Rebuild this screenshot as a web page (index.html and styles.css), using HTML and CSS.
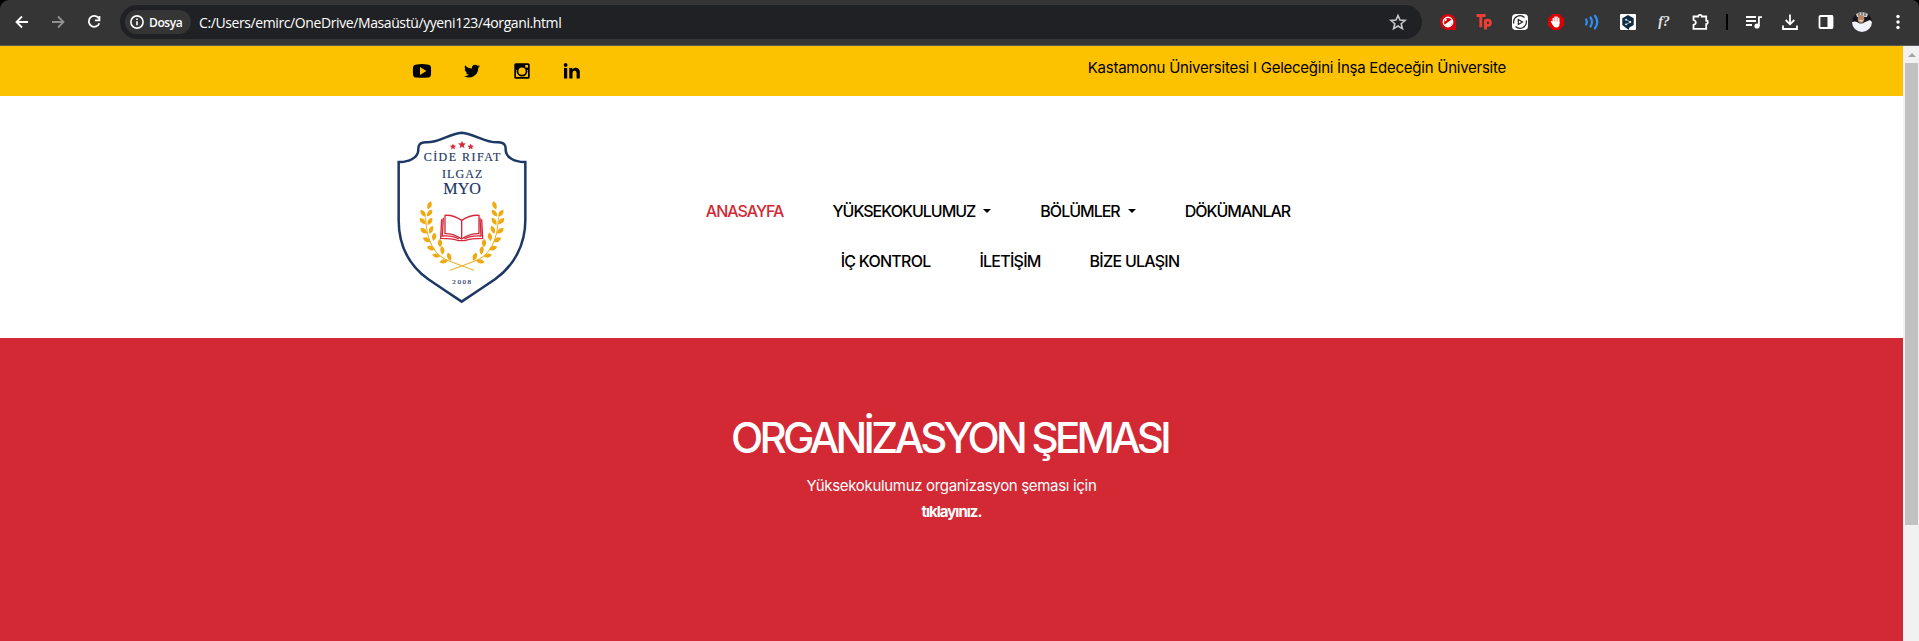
FILE: index.html
```html
<!DOCTYPE html>
<html lang="tr">
<head>
<meta charset="utf-8">
<title>Organizasyon Şeması</title>
<link rel="stylesheet" href="styles.css">
</head>
<body>
<div class="toolbar">
  <div class="nav-buttons">
    <svg class="ic" viewBox="0 0 24 24"><path class="line" d="M18 12H7M12 6.5L6.5 12l5.500 5.500"/></svg>
    <svg class="ic dim" viewBox="0 0 24 24"><path class="line" d="M6 12h11M12 6.500l5.500 5.500-5.500 5.500"/></svg>
    <svg class="ic" viewBox="0 0 24 24"><path class="line" d="M16.600 8.200A5.400 5.400 0 1 0 17.300 13.200M17.400 6v4.400H13"/></svg>
  </div>
  <div class="omnibox">
    <div class="chip">
      <svg class="info" viewBox="0 0 14 14"><circle cx="7" cy="7" r="6.100"/><path d="M7 6.200v4M7 3.600v1.500"/></svg>
      <span class="chip-text">Dosya</span>
    </div>
    <span class="url">C:/Users/emirc/OneDrive/Masaüstü/yyeni123/4organi.html</span>
    <svg class="ic star" viewBox="0 0 24 24"><path d="M12 5.500l2 4.600 5 .4-3.800 3.200 1.200 4.900L12 16l-4.400 2.600 1.200-4.900L5 10.500l5-.4z"/></svg>
  </div>
  <div class="extensions">
    <svg class="ic" viewBox="0 0 24 24"><path fill="#d3060f" d="M12 4a8 8 0 1 0 0 16h8v-8a8 8 0 0 0-8-8z"/><circle cx="12" cy="12" r="4.700" fill="none" stroke="#fff" stroke-width="1.400"/><path fill="#fff" d="M8 15l7.800-5.500.7 2.500-2 4-4 .5z"/><path fill="#fff" d="M8.800 8.500l2 .3-.5 2-2 .7z"/></svg>
    <svg class="ic" viewBox="0 0 24 24"><path fill="none" stroke="#ef3e36" stroke-width="2.900" d="M4.500 5.500h9M8.800 5.500v11.700M13.500 9.500v10"/><circle cx="15.800" cy="12.800" r="2.700" fill="none" stroke="#ef3e36" stroke-width="2.600"/></svg>
    <svg class="ic" viewBox="0 0 24 24"><rect x="4" y="4" width="16" height="16" rx="4" fill="#fff"/><g fill="none" stroke="#222" stroke-width="1.200"><path d="M5.800 13.500A6.400 6.400 0 0 1 16.500 7.500M18.200 10.500A6.400 6.400 0 0 1 7.500 16.500"/><path d="M10.300 9.500v5l4.200-2.500z"/></g></svg>
    <svg class="ic" viewBox="0 0 24 24"><path fill="#dc0000" d="M8.700 4h6.600L20 8.700v6.600L15.300 20H8.700L4 15.300V8.700z"/><path fill="none" stroke="#fff" stroke-width="1.500" stroke-linecap="round" d="M9.300 13V8.500M11.100 12V7M12.900 12V7M14.700 13V8.300M7.500 11.500l2 3.500"/><path fill="#fff" d="M8.700 11.500h6.800v2.200q0 4-3.400 3.800-2.300 0-3.400-3z"/></svg>
    <svg class="ic" viewBox="0 0 24 24"><path fill="none" stroke="#2f8df5" stroke-width="2.300" stroke-linecap="round" d="M6.200 9.500q1.500 2.500 0 5M10.500 7.500q3 4.500 0 9M15 5.800q4.500 6.200 0 12.400"/></svg>
    <svg class="ic" viewBox="0 0 24 24"><rect x="4" y="4" width="16" height="16" rx="1" fill="#fff"/><path fill="#0f2b46" d="M12 5l5.700 3.300v6.600L13 17.700V20l-3-2-3.700-3.100V8.300z"/><path d="M10 9.500l4.500 2.500-4.500 2.500" fill="none" stroke="#fff" stroke-width=".6"/><g fill="#fff"><circle cx="10" cy="9.700" r=".9"/><circle cx="14.300" cy="12" r=".9"/><circle cx="10" cy="14.300" r=".9"/></g></svg>
    <span class="ic fq">f?</span>
    <svg class="ic" viewBox="0 0 24 24"><path class="line" d="M5.500 6.500h4.700a1.800 1.700 0 0 1 3.600 0h4.400v4a1.600 1.800 0 0 1 0 3.600v4.700H5.500v-4q2.300-.6 2.300-2.400T5.500 10z"/></svg>
    <i class="divider"></i>
    <svg class="ic" viewBox="0 0 24 24"><path class="line" d="M4 7h10M4 11h10M4 15h6M16.900 16V7.200H20"/><circle cx="15" cy="16" r="2.600" fill="#fff"/></svg>
    <svg class="ic" viewBox="0 0 24 24"><path class="line" d="M12 4.500v9.500M7.700 10l4.300 4.300 4.300-4.300M5 15.500V19h14v-3.500"/></svg>
    <svg class="ic" viewBox="0 0 24 24"><rect class="line" x="5.500" y="6" width="13" height="12" rx="1"/><path fill="#fff" d="M13.500 5.500H19v13h-5.500z"/></svg>
    <svg class="ic avatar" viewBox="0 0 20 20"><circle cx="10" cy="10" r="10" fill="#17151a"/><path fill="#c9c9cb" d="M4 2Q10-2 16 2l-1 3H5z"/><path stroke="#444" d="M7 1v3M10 0v3M13 1v3"/><ellipse cx="9" cy="7" rx="3.300" ry="4" fill="#b98668"/><path fill="#f0f3fa" d="M0 10q3-1 5 0 4 3 8 0l5-2 2 2a10 10 0 0 1-20 0z"/><path d="M7.500 8.500q1.500 1 3 0" stroke="#fff" fill="none"/></svg>
    <svg class="ic" viewBox="0 0 24 24"><g fill="#fff"><circle cx="12" cy="6.500" r="1.700"/><circle cx="12" cy="12" r="1.700"/><circle cx="12" cy="17.500" r="1.700"/></g></svg>
  </div>
</div>

<div class="viewport">
  <div class="page">
    <div class="topbar">
      <div class="social">
        <svg class="soc" viewBox="0 0 20 20"><path fill-rule="evenodd" d="M5 3.400Q10 2.800 15 3.400q3.800 0 4 3.200.2 3.400 0 6.800-.2 3.200-4 3.200-5 .5-10 0-3.800 0-4-3.200-.2-3.400 0-6.800.2-3.200 4-3.200zM8 6v8l6.400-4z"/></svg>
        <svg class="soc" viewBox="0 0 24 24"><path d="M21.500 6.200a8 8 0 0 1-2.200.6 3.900 3.900 0 0 0 1.700-2.100 7.800 7.800 0 0 1-2.500.9 3.900 3.900 0 0 0-6.600 3.500A11 11 0 0 1 3.900 5a3.900 3.900 0 0 0 1.200 5.200 3.800 3.800 0 0 1-1.800-.5 3.900 3.900 0 0 0 3.100 3.900 3.900 3.900 0 0 1-1.700.1 3.900 3.900 0 0 0 3.600 2.700A7.800 7.800 0 0 1 2.600 18a11 11 0 0 0 16.900-9.800 7.800 7.800 0 0 0 2-2z"/></svg>
        <svg class="soc" viewBox="0 0 20 20"><rect x="2.300" y="2.300" width="15.400" height="15.400" rx="1.500"/><path fill="#fcc200" d="M4 9h12v7H4z"/><circle cx="10" cy="10.200" r="5.400"/><circle cx="10" cy="10.200" r="3.600" fill="#fcc200"/><path fill="#fcc200" d="M13.300 4H16v2.600h-2.700z"/></svg>
        <svg class="soc" viewBox="0 0 20 20"><circle cx="3.600" cy="4" r="1.900"/><path d="M2 7h3.200v10.500H2zM7.300 7h3v1.500q1-1.800 3.300-1.800 4.200 0 4.200 4.600v6.200h-3.200v-5.600q0-2.500-1.900-2.500-2.200 0-2.200 2.600v5.500H7.300z"/></svg>
      </div>
      <div class="slogan">Kastamonu Üniversitesi I Geleceğini İnşa Edeceğin Üniversite</div>
    </div>

    <div class="header">
      <svg class="logo" viewBox="0 0 480 570">
        <defs>
          <path id="star" d="M0-12L3.200-4 12-3.600 5.200 1.800 7.400 10.800 0 5.800-7.400 10.800-5.200 1.800-12-3.600l8.800-.4z"/>
          <path id="leaf" d="M0-14Q13-2 0 12-13-2 0-14z"/>
          <g id="branch">
            <use href="#leaf" transform="translate(148 257) rotate(20)"/>
            <use href="#leaf" transform="translate(130 281) rotate(-35)"/><use href="#leaf" transform="translate(148 280) rotate(38)"/>
            <use href="#leaf" transform="translate(129 304) rotate(-45)"/><use href="#leaf" transform="translate(149 305) rotate(32)"/>
            <use href="#leaf" transform="translate(132 333) rotate(-52)"/><use href="#leaf" transform="translate(153 330) rotate(22)"/>
            <use href="#leaf" transform="translate(141 360) rotate(-62)"/><use href="#leaf" transform="translate(162 351) rotate(10)"/>
            <use href="#leaf" transform="translate(154 385) rotate(-70)"/><use href="#leaf" transform="translate(180 370) rotate(0)"/>
            <use href="#leaf" transform="translate(170 407) rotate(-80)"/><use href="#leaf" transform="translate(187 392) rotate(-8)"/>
            <use href="#leaf" transform="translate(192 424) rotate(-100)"/><use href="#leaf" transform="translate(208 411) rotate(-18)"/>
            <path d="M137 292Q140 400 210 424L282 451" fill="none" stroke="#eeaa12" stroke-width="3"/>
          </g>
        </defs>
        <path d="M245 38C205 42 178 68 139 67 118 66 114 78 115 91 113 113 88 127 56 126V300C56 375 88 437 145 478Q195 512 245 545 295 512 345 478C402 437 436 375 436 300V126C404 127 379 113 377 91 378 78 374 66 353 67 314 68 285 42 245 38z" fill="#fff" stroke="#1d3864" stroke-width="7.500"/>
        <g fill="#d62839"><use href="#star" transform="translate(219 80) scale(.82)"/><use href="#star" transform="translate(246 74)"/><use href="#star" transform="translate(272 80) scale(.82)"/></g>
        <g class="logo-text">
          <text x="131" y="123" font-size="36" textLength="230">CİDE RIFAT</text>
          <text x="186" y="174" font-size="36" textLength="121">ILGAZ</text>
          <text x="190" y="223" font-size="47" textLength="113" lengthAdjust="spacingAndGlyphs">MYO</text>
          <text x="217" y="491" font-size="21" textLength="56">2008</text>
        </g>
        <g fill="none" stroke="#d62839" stroke-width="4">
          <path d="M245 301Q219 284 195 286V341Q219 340 245 357Q271 340 297 341V286Q271 284 245 301V357"/>
          <path d="M190 293L187 348Q218 346 237 357M300 293L303 348Q272 346 253 357M185 298L182 355Q218 355 235 362H255Q272 355 308 355L305 298"/>
        </g>
        <g fill="#eeaa12"><use href="#branch"/><use href="#branch" transform="translate(492 0) scale(-1 1)"/></g>
      </svg>
      <nav class="menu">
        <div class="row first">
          <a class="item active">ANASAYFA</a>
          <a class="item drop">YÜKSEKOKULUMUZ</a>
          <a class="item drop">BÖLÜMLER</a>
          <a class="item">DÖKÜMANLAR</a>
        </div>
        <div class="row">
          <a class="item">İÇ KONTROL</a>
          <a class="item">İLETİŞİM</a>
          <a class="item">BİZE ULAŞIN</a>
        </div>
      </nav>
    </div>

    <div class="hero">
      <h1 class="title">ORGANİZASYON ŞEMASI</h1>
      <p class="lead">Yüksekokulumuz organizasyon şeması için</p>
      <a class="link">tıklayınız.</a>
    </div>
  </div>
  <div class="scrollbar"><i class="arrow"></i><i class="thumb"></i></div>
</div>
</body>
</html>
```
FILE: styles.css
```css
* { box-sizing: border-box; }
body { margin: 0; height: 641px; overflow: hidden; background: #000; font-family: Inter, "Open Sans", sans-serif; display: flex; flex-direction: column; }

.toolbar { height: 46px; flex: none; background: #353535; border-bottom: 1px solid #5a5a5c; border-radius: 9px 7px 0 0; display: flex; align-items: center; padding: 0 9px 1px 10px; }
.ic { width: 24px; height: 24px; flex: none; display: block; }
.line { fill: none; stroke: #fff; stroke-width: 1.8; }
.dim { opacity: .45; }
.nav-buttons { display: flex; gap: 12px; width: 110px; flex: none; }
.omnibox { width: 1302px; height: 34px; flex: none; border-radius: 17px; background: #202124; display: flex; align-items: center; padding: 0 12px 0 5px; }
.chip { width: 66px; height: 24px; border-radius: 12px; background: #353535; display: flex; align-items: center; padding-left: 5px; gap: 5px; }
.info { width: 14px; height: 14px; fill: none; stroke: #fff; stroke-width: 1.6; }
.chip-text { font: 600 12px "Open Sans", sans-serif; color: #fff; letter-spacing: -.4px; }
.url { font: 14px "Open Sans", sans-serif; color: #fff; margin-left: 8px; letter-spacing: -.4px; white-space: nowrap; }
.star { margin-left: auto; fill: none; stroke: #c8c8c8; stroke-width: 1.6; }
.extensions { display: flex; align-items: center; gap: 12px; margin-left: 14px; }
.fq { font: italic 700 14px/24px "Liberation Serif", serif; color: #e4e4e4; text-align: center; }
.divider { width: 2px; height: 16px; background: #000; margin: 0 2px; }
.avatar { width: 20px; height: 20px; margin: 0 2px; }

.viewport { flex: 1; display: flex; min-height: 0; }
.page { width: 1903px; display: flex; flex-direction: column; background: #fff; }
.scrollbar { width: 16px; background: #f1f1f1; display: flex; flex-direction: column; padding: 7px 1px 0 2px; }
.arrow { width: 0; height: 0; border: 4px solid transparent; border-top-width: 0; border-bottom-color: #a3a3a3; align-self: center; margin-bottom: 6px; }
.thumb { height: 462px; background: #c1c1c1; }

.topbar { height: 50px; background: #fcc200; display: flex; justify-content: space-between; padding: 0 397px 0 412px; }
.social { display: flex; gap: 30px; padding-top: 15px; }
.soc { width: 20px; height: 20px; }
.slogan { font-size: 15px; line-height: 24px; padding-top: 10px; color: #000; white-space: nowrap; letter-spacing: -.25px; }

.header { height: 242px; display: flex; padding: 24px 0 0 380px; }
.logo { width: 160px; height: 190px; }
.logo-text { font-family: "Liberation Serif", serif; fill: #1d3864; stroke: #1d3864; stroke-width: .5; }
.menu { width: 942px; padding-top: 66px; }
.row { height: 50px; display: flex; justify-content: center; gap: 49px; padding-right: 2px; }
.first { padding-right: 26px; }
.item { display: flex; align-items: center; height: 50px; color: #000; font-size: 16px; font-weight: 500; letter-spacing: -.75px; white-space: nowrap; }
.first .item { letter-spacing: -1px; }
.active { color: #d22935; }
.drop::after { content: ""; margin-left: 8px; border: 4px solid transparent; border-top-color: currentColor; border-bottom-width: 0; }

.hero { flex: 1; background: #d22935; color: #fff; text-align: center; padding-top: 74px; }
.title { margin: 0; padding-right: 4px; font-size: 42px; line-height: 52px; font-weight: 550; letter-spacing: -3.75px; }
.lead { margin: 9px 0 0; font-size: 15px; line-height: 26px; letter-spacing: -.32px; }
.link { display: block; font-size: 15px; line-height: 26px; font-weight: 700; letter-spacing: -1px; }
```
